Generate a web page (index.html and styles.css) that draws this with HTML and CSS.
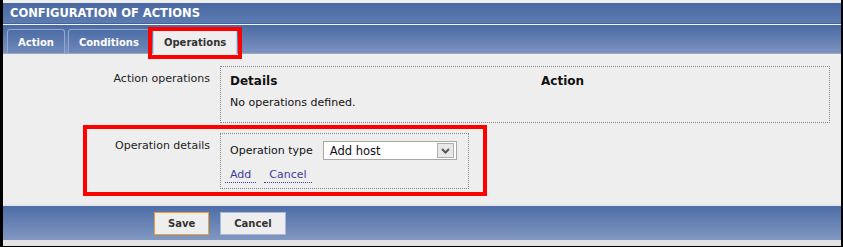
FILE: index.html
```html
<!DOCTYPE html>
<html lang="en">
<head>
    <meta charset="UTF-8">
    <title>Configuration of actions</title>
    <link rel="stylesheet" href="styles.css">
</head>
<body>
    <div class="frame">
        <div class="title-bar">CONFIGURATION OF ACTIONS</div>

        <div class="tab-bar">
            <span class="tab">Action</span>
            <span class="tab">Conditions</span>
            <span class="tab active">Operations</span>
            <!-- annotation around the active tab -->
            <div class="mark mark-tab"></div>
        </div>

        <div class="content">
            <div class="row">
                <div class="label">Action operations</div>
                <div class="box wide">
                    <table class="ops">
                        <tr><th class="col-details">Details</th><th>Action</th></tr>
                        <tr><td colspan="2">No operations defined.</td></tr>
                    </table>
                </div>
            </div>

            <div class="row">
                <div class="label">Operation details</div>
                <div class="box">
                    <div class="op-type">
                        <span>Operation type</span>
                        <div class="select">
                            <span>Add host</span>
                            <span class="select-btn">
                                <svg width="9" height="6" viewBox="0 0 9 6"><path d="M1 1 L4.5 4.5 L8 1" fill="none" stroke="#555" stroke-width="2"/></svg>
                            </span>
                        </div>
                    </div>
                    <div class="links">
                        <a href="#">Add</a>
                        <a href="#">Cancel</a>
                    </div>
                </div>
            </div>
            <!-- annotation around operation details -->
            <div class="mark mark-details"></div>
        </div>

        <div class="footer">
            <button class="btn primary">Save</button>
            <button class="btn">Cancel</button>
        </div>
        <div class="bottom"></div>
    </div>
</body>
</html>
```

FILE: styles.css
```css
body {
    margin: 0;
    font-family: "DejaVu Sans", Verdana, sans-serif;
    font-size: 11px;
    color: #111;
    background-color: #eee;
}

.frame {
    border-left: 3px solid #000;
    border-right: 2px solid #000;
    border-bottom: 2px solid #000;
    padding-top: 3px;
    background-color: #eee;
    height: 242px;
}

.title-bar {
    height: 20px;
    line-height: 20px;
    padding-left: 7px;
    color: #fff;
    font-weight: bold;
    font-size: 11.5px;
    background: linear-gradient(#4a69a4, #5c7bb0);
    border-bottom: 1px solid #45639a;
}

.tab-bar {
    position: relative;
    height: 28px;
    padding-left: 4px;
    display: flex;
    align-items: flex-end;
    gap: 3px;
    background: linear-gradient(#4a6aa4, #7c93bf);
    border-top: 1px solid #f4f4f4;
    border-bottom: 1px solid #9aa8c0;
}

.tab {
    height: 22px;
    line-height: 23px;
    padding: 1px 10px 0;
    color: #fff;
    font-weight: bold;
    font-size: 10px;
    border: 1px solid #93a8d0;
    border-bottom: none;
    border-radius: 3px 3px 0 0;
    background: linear-gradient(#4d6da6, #6f89b8);
}

.tab.active {
    color: #333;
    background: #eee;
    border-color: #c9d2e3;
    margin-bottom: -1px;
    height: 23px;
}

.mark {
    position: absolute;
    border: 4px solid #f00;
    pointer-events: none;
}

.mark-tab {
    left: 145px;
    top: 2px;
    width: 86px;
    height: 24px;
}

.content {
    position: relative;
    padding: 12px 0 15px;
    display: flex;
    flex-direction: column;
    gap: 10px;
}

.row {
    display: flex;
    align-items: flex-start;
}

.label {
    width: 207px;
    padding-right: 10px;
    text-align: right;
    padding-top: 6px;
    color: #222;
}

.box {
    border: 1px dotted #888;
    padding: 7px 11px 5px 9px;
}

.box.wide {
    width: 588px;
    padding-bottom: 13px;
}

.ops {
    border-collapse: collapse;
    width: 100%;
}

.ops th {
    text-align: left;
    font-size: 12px;
    padding: 0 0 8px;
}

.ops .col-details {
    width: 311px;
}

.ops td {
    padding: 0;
}

.op-type {
    display: flex;
    align-items: center;
    gap: 10px;
}

.select {
    width: 124px;
    height: 17px;
    border: 1px solid #a8a8a0;
    background-color: #fff;
    display: flex;
    align-items: center;
    justify-content: space-between;
    padding: 0 2px 0 6px;
    font-size: 11.5px;
}

.select-btn {
    width: 15px;
    height: 13px;
    border: 1px solid #b0b0b0;
    background-color: #e8e8e8;
    display: flex;
    align-items: center;
    justify-content: center;
}

.links {
    margin: 8px 0 0 -5px;
    display: flex;
    gap: 8px;
}

.links a {
    color: #3d3d9b;
    text-decoration: none;
    border-bottom: 1px dotted #3d3d9b;
    padding: 0 5px 1px;
}

.mark-details {
    left: 80px;
    top: 71px;
    width: 396px;
    height: 63px;
}

.footer {
    border-top: 2px solid #e6e6ee;
    height: 34px;
    padding-left: 151px;
    display: flex;
    align-items: center;
    gap: 11px;
    background: linear-gradient(#4e6da6, #8198c2);
}

.btn {
    font-family: "DejaVu Sans", Verdana, sans-serif;
    font-size: 10px;
    font-weight: bold;
    color: #333;
    background-color: #eee;
    border: 1px solid #a9b9d9;
    height: 23px;
    padding: 0 13px;
}

.btn.primary {
    border-color: #f0a030;
}

.bottom {
    height: 6px;
    background-color: #e4e4e4;
}
```
